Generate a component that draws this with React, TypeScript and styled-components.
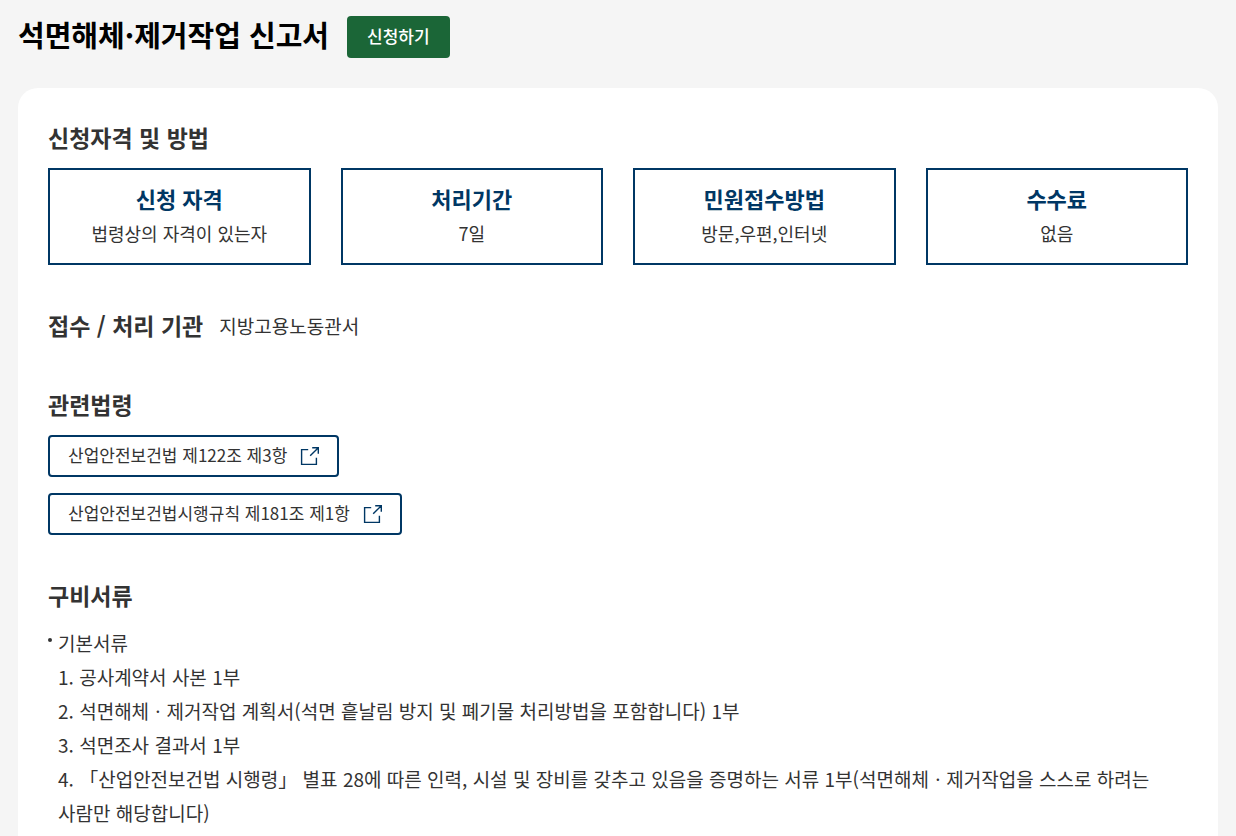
import React from "react";
import styled, { createGlobalStyle } from "styled-components";

const color = {
  page: "#f5f5f5",
  navy: "#003764",
  green: "#1b6637",
  text: "#333333",
};

const GlobalStyle = createGlobalStyle`
  *, *::before, *::after { box-sizing: border-box; }
  body {
    margin: 0;
    background: ${color.page};
    color: ${color.text};
    font-family: "Noto Sans CJK KR", "Noto Sans", sans-serif;
    word-break: keep-all;
  }
  h1, h2, h3, p, ul, ol { margin: 0; padding: 0; }
  ul, ol { list-style: none; }
`;

const Page = styled.main`
  display: flex;
  flex-direction: column;
  min-height: 100vh;
  padding: 0 18px;
`;

const Header = styled.header`
  display: flex;
  align-items: flex-start;
  gap: 18px;
  padding: 16px 0 30px;
`;

const Title = styled.h1`
  color: #000;
  font-size: 29px;
  font-weight: 700;
  line-height: 36px;
`;

const ApplyButton = styled.button`
  height: 42px;
  padding: 0 20px 2px;
  border: 0;
  border-radius: 4px;
  background: ${color.green};
  color: #fff;
  font: 500 17px/40px "Noto Sans CJK KR", sans-serif;
  cursor: pointer;
`;

const Panel = styled.div`
  display: flex;
  flex: 1;
  flex-direction: column;
  gap: 43px;
  padding: 32px 30px 0;
  border-radius: 20px 20px 0 0;
  background: #fff;
`;

const Section = styled.section<{ $inline?: boolean }>`
  display: flex;
  flex-direction: ${(p) => (p.$inline ? "row" : "column")};
  gap: ${(p) => (p.$inline ? "16px" : "14px")};
`;

const Heading = styled.h2`
  font-size: 23px;
  font-weight: 700;
  line-height: 34px;
`;

const Agency = styled.p`
  font-size: 19px;
  line-height: 36px;
`;

const Summary = styled.ul`
  display: grid;
  grid-template-columns: repeat(4, 1fr);
  gap: 30px;
`;

const SummaryItem = styled.li`
  padding: 12px 10px 11px;
  border: 2px solid ${color.navy};
  text-align: center;
`;

const SummaryTitle = styled.h3`
  color: ${color.navy};
  font-size: 22px;
  font-weight: 700;
  line-height: 32px;
`;

const SummaryText = styled.p`
  font-size: 18px;
  line-height: 38px;
`;

const LawList = styled.ul`
  display: flex;
  flex-direction: column;
  align-items: flex-start;
  gap: 16px;
`;

const LawLink = styled.a`
  display: flex;
  gap: 12px;
  height: 42px;
  padding: 0 18px;
  border: 2px solid ${color.navy};
  border-radius: 4px;
  color: inherit;
  font-size: 17px;
  line-height: 36px;
  text-decoration: none;

  svg {
    align-self: center;
  }
`;

const DocumentList = styled.ul`
  font-size: 19px;
  line-height: 34px;
`;

const DocumentGroup = styled.li`
  position: relative;
  padding-left: 10px;

  &::before {
    content: "";
    position: absolute;
    top: 12px;
    left: 0;
    width: 4px;
    height: 4px;
    border-radius: 50%;
    background: ${color.text};
  }
`;

const ExternalIcon = () => (
  <svg width="20" height="20" viewBox="0 0 20 20" fill="none" stroke={color.navy} strokeWidth="1.4" aria-hidden="true">
    <path d="M9.2 3.6H2.6V18.4H17.4V11.8" />
    <path d="M11.2 9.8L18.8 2.2M13.2 1.7H19.3V7.8" />
  </svg>
);

const summary = [
  { title: "신청 자격", text: "법령상의 자격이 있는자" },
  { title: "처리기간", text: "7일" },
  { title: "민원접수방법", text: "방문,우편,인터넷" },
  { title: "수수료", text: "없음" },
];

const laws = ["산업안전보건법 제122조 제3항", "산업안전보건법시행규칙 제181조 제1항"];

const documents = [
  "1. 공사계약서 사본 1부",
  "2. 석면해체ㆍ제거작업 계획서(석면 흩날림 방지 및 폐기물 처리방법을 포함합니다) 1부",
  "3. 석면조사 결과서 1부",
  "4. 「산업안전보건법 시행령」 별표 28에 따른 인력, 시설 및 장비를 갖추고 있음을 증명하는 서류 1부(석면해체ㆍ제거작업을 스스로 하려는 사람만 해당합니다)",
];

export default function App() {
  return (
    <>
      <GlobalStyle />
      <Page lang="ko">
        <Header>
          <Title>석면해체·제거작업 신고서</Title>
          <ApplyButton type="button">신청하기</ApplyButton>
        </Header>
        <Panel>
          <Section>
            <Heading>신청자격 및 방법</Heading>
            <Summary>
              {summary.map((item) => (
                <SummaryItem key={item.title}>
                  <SummaryTitle>{item.title}</SummaryTitle>
                  <SummaryText>{item.text}</SummaryText>
                </SummaryItem>
              ))}
            </Summary>
          </Section>
          <Section $inline>
            <Heading>접수 / 처리 기관</Heading>
            <Agency>지방고용노동관서</Agency>
          </Section>
          <Section>
            <Heading>관련법령</Heading>
            <LawList>
              {laws.map((law) => (
                <li key={law}>
                  <LawLink href="#">
                    {law}
                    <ExternalIcon />
                  </LawLink>
                </li>
              ))}
            </LawList>
          </Section>
          <Section>
            <Heading>구비서류</Heading>
            <DocumentList>
              <DocumentGroup>
                <p>기본서류</p>
                <ol>
                  {documents.map((text) => (
                    <li key={text}>{text}</li>
                  ))}
                </ol>
              </DocumentGroup>
            </DocumentList>
          </Section>
        </Panel>
      </Page>
    </>
  );
}
